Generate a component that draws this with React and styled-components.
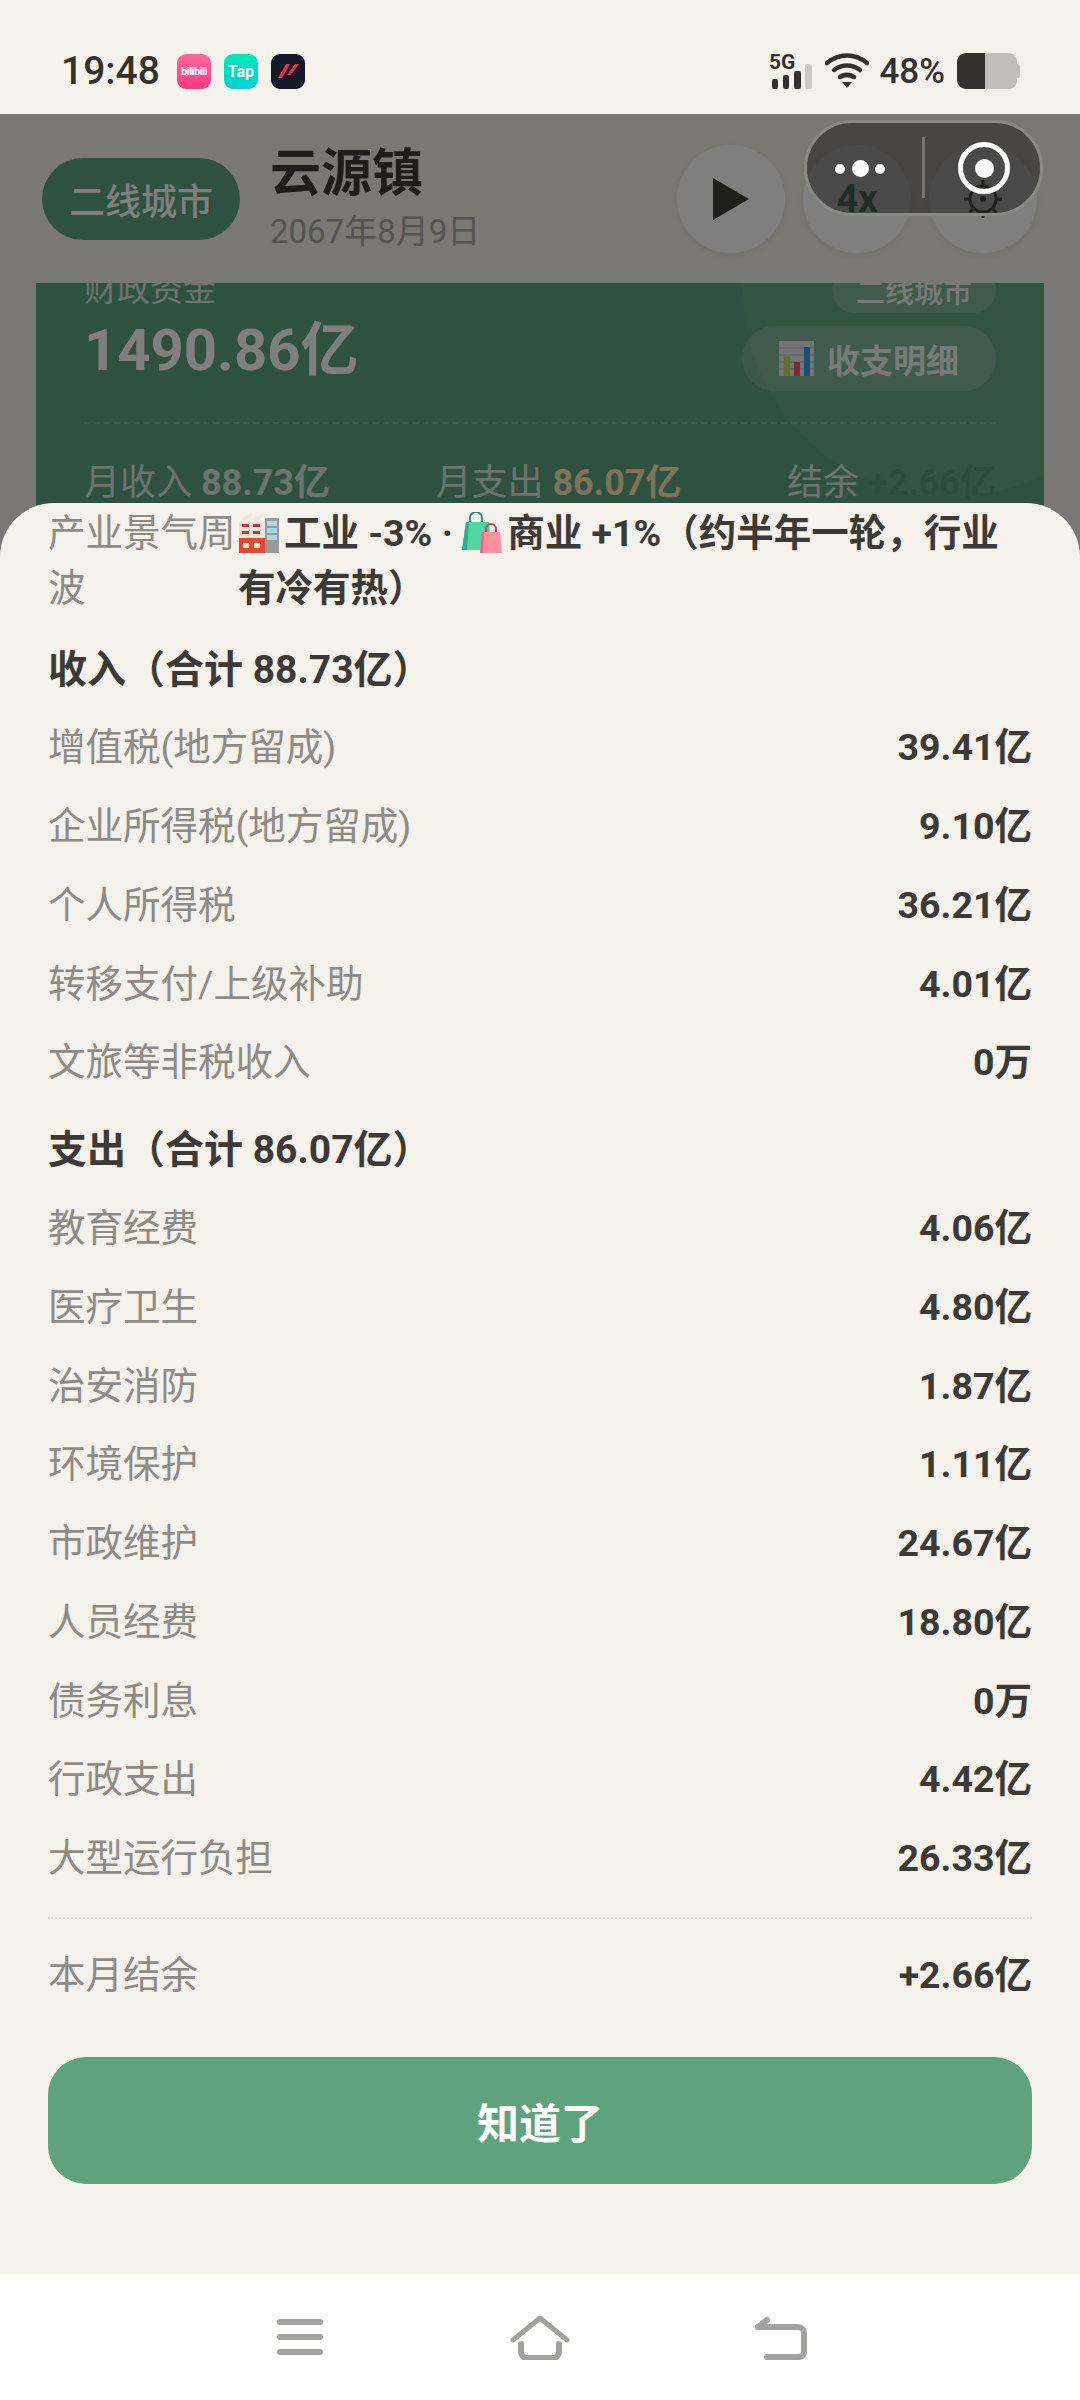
import React from 'react';
import styled, { createGlobalStyle } from 'styled-components';

const GlobalStyle = createGlobalStyle`
    html, body {
        margin: 0;
        padding: 0;
        background: #f5f1eb;
    }
    * {
        box-sizing: border-box;
    }
`;

const Screen = styled.div`
    width: 1080px;
    height: 2400px;
    display: flex;
    flex-direction: column;
    overflow: hidden;
    background: #f5f1eb;
    color: #3d3a36;
    font-family: Roboto, 'Noto Sans CJK SC', sans-serif;
`;

/* status bar */
const StatusBar = styled.div`
    height: 114px;
    flex: none;
    display: flex;
    align-items: center;
    padding: 28px 60px 0 61px;
    color: #33302d;
`;
const Time = styled.span`
    font-size: 39px;
    font-weight: 500;
    margin-right: 17px;
`;
const AppIcon = styled.div`
    width: 34px;
    height: 35px;
    border-radius: 9px;
    margin-right: 13px;
    display: flex;
    align-items: center;
    justify-content: center;
    overflow: hidden;
    color: #fff;
    font-weight: 700;
    font-size: ${(p) => p.$size || 16}px;
    letter-spacing: ${(p) => p.$spacing || 0}px;
    background: ${(p) => p.$bg};
`;
const StatusRight = styled.div`
    margin-left: auto;
    display: flex;
    align-items: center;
`;
const SignalIcon = styled.svg`
    overflow: visible;
`;
const WifiIcon = styled.svg`
    margin-left: 12px;
`;
const Percent = styled.span`
    font-size: 35px;
    font-weight: 500;
    margin: 0 12px 0 10px;
`;

/* page behind the sheet */
const Main = styled.div`
    flex: 1;
    position: relative;
    overflow: hidden;
    display: flex;
    flex-direction: column;
`;
const Header = styled.header`
    height: 169px;
    flex: none;
    display: flex;
    align-items: center;
    padding: 0 43px 0 42px;
`;
const LevelPill = styled.div`
    width: 198px;
    height: 82px;
    border-radius: 41px;
    background: #5fa37e;
    color: #fff;
    font-size: 36px;
    font-weight: 500;
    display: flex;
    align-items: center;
    justify-content: center;
`;
const TitleGroup = styled.div`
    margin-left: 30px;
    display: flex;
    flex-direction: column;
`;
const CityName = styled.div`
    font-size: 51px;
    font-weight: 700;
    line-height: 60px;
`;
const DateText = styled.div`
    font-size: 33px;
    line-height: 44px;
    margin-top: 6px;
    color: #a9a6a1;
`;
const HeaderActions = styled.div`
    margin-left: auto;
    display: flex;
    gap: 18px;
`;
const RoundButton = styled.div`
    width: 108px;
    height: 108px;
    border-radius: 50%;
    background: #fff;
    box-shadow: 0 2px 8px rgba(0, 0, 0, 0.06);
    display: flex;
    align-items: center;
    justify-content: center;
    font-size: 38px;
    font-weight: 700;
    color: #3a7458;
`;

const ScrollArea = styled.div`
    flex: 1;
    overflow: hidden;
    padding: 0 36px;
`;
const Card = styled.section`
    position: relative;
    overflow: hidden;
    margin-top: -53px;
    height: 600px;
    background: #5fa37e;
    padding: 36px 48px;
    color: #fff;
`;
const CardGlow = styled.div`
    position: absolute;
    left: 707px;
    top: -147px;
    width: 414px;
    height: 414px;
    border-radius: 50%;
    background: rgba(255, 255, 255, 0.06);
`;
const CardTop = styled.div`
    position: relative;
    display: flex;
    justify-content: space-between;
`;
const FundColumn = styled.div`
    display: flex;
    flex-direction: column;
`;
const FundLabel = styled.div`
    font-size: 33px;
    line-height: 48px;
    color: rgba(255, 255, 255, 0.75);
`;
const FundAmount = styled.div`
    font-size: 58px;
    line-height: 70px;
    font-weight: 700;
    margin-top: 1px;
`;
const CardActions = styled.div`
    display: flex;
    flex-direction: column;
    align-items: flex-end;
    padding-top: 1px;
    gap: 13px;
`;
const CardTag = styled.div`
    height: 46px;
    padding: 0 24px;
    border-radius: 23px;
    background: rgba(255, 255, 255, 0.16);
    font-size: 29px;
    font-weight: 500;
    display: flex;
    align-items: center;
    color: rgba(255, 255, 255, 0.9);
`;
const DetailButton = styled.div`
    width: 254px;
    height: 65px;
    border-radius: 33px;
    background: rgba(255, 255, 255, 0.16);
    font-size: 33px;
    font-weight: 700;
    display: flex;
    align-items: center;
    justify-content: center;
    gap: 13px;
    color: rgba(255, 255, 255, 0.9);
`;
const DashedLine = styled.div`
    position: relative;
    margin-top: 31px;
    border-top: 2px dashed rgba(255, 255, 255, 0.22);
`;
const Stats = styled.div`
    position: relative;
    margin-top: 35px;
    display: flex;
    justify-content: space-between;
    font-size: 36px;
    line-height: 48px;
    color: rgba(255, 255, 255, 0.75);
`;
const StatValue = styled.b`
    font-weight: 700;
    color: ${(p) => p.$color || 'rgba(255, 255, 255, 0.75)'};
`;

/* overlays */
const Dim = styled.div`
    position: absolute;
    inset: 0;
    background: rgba(0, 0, 0, 0.5);
`;
const Capsule = styled.div`
    position: absolute;
    top: 6px;
    right: 37px;
    width: 239px;
    height: 96px;
    border-radius: 48px;
    border: 3px solid #8a8a85;
    background: rgba(35, 35, 35, 0.58);
    display: flex;
    align-items: center;
`;
const CapsuleDivider = styled.div`
    position: absolute;
    left: 115px;
    top: 14px;
    width: 3px;
    height: 61px;
    background: rgba(255, 255, 255, 0.25);
`;
const CapsuleDots = styled.div`
    position: absolute;
    left: 28px;
    top: 37px;
    width: 50px;
    height: 17px;
    display: flex;
    align-items: center;
    justify-content: space-between;
`;
const Dot = styled.i`
    display: block;
    width: ${(p) => p.$size}px;
    height: ${(p) => p.$size}px;
    border-radius: 50%;
    background: #fff;
`;
const CapsuleTarget = styled.div`
    position: absolute;
    left: 151px;
    top: 19px;
    width: 52px;
    height: 52px;
    border-radius: 50%;
    border: 5px solid #fff;
    display: flex;
    align-items: center;
    justify-content: center;
`;

const Sheet = styled.div`
    position: absolute;
    left: 0;
    right: 0;
    bottom: 0;
    height: 1771px;
    background: #f5f1eb;
    border-radius: 54px 54px 0 0;
    padding: 3px 48px 0 48px;
    display: flex;
    flex-direction: column;
    font-size: 37.5px;
`;
const NoteRow = styled.div`
    display: flex;
    line-height: 55px;
    padding-bottom: 8px;
`;
const NoteLabel = styled.div`
    flex: 0 0 190px;
    color: #8e8a84;
`;
const NoteValue = styled.div`
    flex: 1;
    font-weight: 700;
    svg {
        vertical-align: -7px;
        margin-right: 5px;
    }
`;
const SectionTitle = styled.div`
    font-size: 39px;
    font-weight: 700;
    line-height: 56px;
    padding: ${(p) => p.$top}px 0 ${(p) => p.$bottom}px;
`;
const Row = styled.div`
    display: flex;
    justify-content: space-between;
    line-height: 56.25px;
    padding: 11.25px 0;
`;
const RowLabel = styled.span`
    color: #8e8a84;
`;
const RowValue = styled.span`
    font-weight: 700;
`;
const DottedLine = styled.div`
    margin: 19px 0 17px;
    border-top: 2px dotted #dedad3;
`;
const ConfirmButton = styled.button`
    margin: 43px 0 0;
    height: 127px;
    flex: none;
    border: 0;
    border-radius: 38px;
    background: #5fa37e;
    color: #fff;
    font-family: inherit;
    font-size: 42px;
    font-weight: 700;
`;

const NavBar = styled.nav`
    height: 126px;
    flex: none;
    background: #fff;
    display: flex;
    justify-content: center;
    align-items: center;
    gap: 180px;
    padding-top: 2px;
`;

function BarEmoji() {
    return (
        <svg width="35" height="35" viewBox="0 0 35 35">
            <rect width="35" height="35" fill="#e9e7ee" />
            <path d="M0 7h35M0 14h35M0 21h35M0 28h35" stroke="#bdbac6" strokeWidth="1" />
            <rect x="5" y="15" width="6" height="20" fill="#b9e060" />
            <rect x="15" y="21" width="6" height="14" fill="#ff5a48" />
            <rect x="25" y="6" width="6" height="29" fill="#2a9cf5" />
        </svg>
    );
}

function FactoryEmoji() {
    return (
        <svg width="41" height="41" viewBox="0 0 41 41">
            <path d="M3 8c2-4 7-5 11-7-1 3-4 6-6 8zM15 8c2-4 7-5 11-7-1 3-4 6-6 8z" fill="#e8e6e2" />
            <rect x="27" y="6" width="14" height="35" fill="#9a9a98" />
            <rect x="29" y="9" width="10" height="5" fill="#a9d5e8" />
            <rect x="29" y="16" width="10" height="5" fill="#a9d5e8" />
            <rect x="29" y="23" width="10" height="5" fill="#a9d5e8" />
            <rect x="1" y="10" width="26" height="31" fill="#e8e4de" />
            <rect x="4" y="12" width="7" height="3" fill="#cf2f3e" />
            <rect x="15" y="12" width="7" height="3" fill="#cf2f3e" />
            <rect x="4" y="19" width="7" height="3" fill="#cf2f3e" />
            <rect x="15" y="19" width="7" height="3" fill="#cf2f3e" />
            <rect x="1" y="26" width="26" height="15" fill="#e5482e" />
            <rect x="5" y="31" width="6" height="5" fill="#f5e6c8" />
            <rect x="16" y="31" width="6" height="5" fill="#f5e6c8" />
        </svg>
    );
}

function BagsEmoji() {
    return (
        <svg width="40" height="41" viewBox="0 0 40 41">
            <path d="M8 10V6a6 6 0 0 1 12 0v6" fill="none" stroke="#2c8f82" strokeWidth="2" />
            <path d="M4 10h23l3 28H0z" fill="#4fd6a2" />
            <path d="M0 38l4-28h3l-2 28z" fill="#2fae8e" />
            <path d="M24 20v-3a5 5 0 0 1 10 0v4" fill="none" stroke="#c93a5c" strokeWidth="2" />
            <path d="M20 20h18l2 21H18z" fill="#ff8f9e" />
            <path d="M18 41l2-21h2l-1 21z" fill="#f0607f" />
        </svg>
    );
}

function Gear() {
    return (
        <svg width="40" height="40" viewBox="0 0 40 40" fill="none" stroke="#3c3c38" strokeWidth="3">
            <circle cx="20" cy="20" r="13" />
            <circle cx="20" cy="20" r="3" fill="#3c3c38" stroke="none" />
            <path d="M20 1v5M20 34v5M1 20h5M34 20h5M6.5 6.5l3.5 3.5M30 30l3.5 3.5M33.5 6.5L30 10M10 30l-3.5 3.5" />
        </svg>
    );
}

const income = [
    ['增值税(地方留成)', '39.41亿'],
    ['企业所得税(地方留成)', '9.10亿'],
    ['个人所得税', '36.21亿'],
    ['转移支付/上级补助', '4.01亿'],
    ['文旅等非税收入', '0万'],
];

const expense = [
    ['教育经费', '4.06亿'],
    ['医疗卫生', '4.80亿'],
    ['治安消防', '1.87亿'],
    ['环境保护', '1.11亿'],
    ['市政维护', '24.67亿'],
    ['人员经费', '18.80亿'],
    ['债务利息', '0万'],
    ['行政支出', '4.42亿'],
    ['大型运行负担', '26.33亿'],
];

function Rows({ items }) {
    return items.map(([label, value]) => (
        <Row key={label}>
            <RowLabel>{label}</RowLabel>
            <RowValue>{value}</RowValue>
        </Row>
    ));
}

export default function App() {
    return (
        <Screen>
            <GlobalStyle />
            <StatusBar>
                <Time>19:48</Time>
                <AppIcon $bg="linear-gradient(#fb6a9c, #ff3a80)" $size={11} $spacing={-0.5}>
                    bilibili
                </AppIcon>
                <AppIcon $bg="linear-gradient(#00e8b4, #00d0d8)" $size={16}>
                    Tap
                </AppIcon>
                <AppIcon $bg="#141829">
                    <svg width="34" height="35" viewBox="0 0 34 35">
                        <path d="M15 10h4l-8 14H7zM24 10h4l-8 11h-4z" fill="#e8304a" />
                    </svg>
                </AppIcon>
                <StatusRight>
                    <SignalIcon width="44" height="36" viewBox="0 0 44 36">
                        <text x="0" y="16" fontSize="21" fontWeight="700" fontFamily="Roboto" fill="#33302d">
                            5G
                        </text>
                        <rect x="3" y="26" width="6" height="10" rx="2" fill="#33302d" />
                        <rect x="14" y="22" width="6" height="14" rx="2" fill="#33302d" />
                        <rect x="25" y="18" width="7" height="18" rx="2" fill="#33302d" />
                        <rect x="36" y="11" width="7" height="25" rx="2" fill="#ccc9c3" />
                    </SignalIcon>
                    <WifiIcon width="44" height="36" viewBox="0 0 44 36" fill="none" stroke="#33302d" strokeLinecap="round">
                        <path d="M2 10C14 0 30 0 42 10" strokeWidth="4.5" />
                        <path d="M9 17c8-6 18-6 26 0" strokeWidth="4.5" />
                        <path d="M15 24c5-3 9-3 14 0" strokeWidth="4.5" />
                        <path d="M17 29h10l-5 6z" fill="#33302d" stroke="none" />
                    </WifiIcon>
                    <Percent>48%</Percent>
                    <svg width="63" height="36" viewBox="0 0 63 36">
                        <path d="M9 0h19v36H9a9 9 0 0 1-9-9V9a9 9 0 0 1 9-9z" fill="#33302d" />
                        <path d="M28 0h24a8 8 0 0 1 8 8v20a8 8 0 0 1-8 8H28z" fill="#c2bfb9" />
                        <path d="M60 11h1a2 2 0 0 1 2 2v10a2 2 0 0 1-2 2h-1z" fill="#c2bfb9" />
                    </svg>
                </StatusRight>
            </StatusBar>

            <Main>
                <Header>
                    <LevelPill>二线城市</LevelPill>
                    <TitleGroup>
                        <CityName>云源镇</CityName>
                        <DateText>2067年8月9日</DateText>
                    </TitleGroup>
                    <HeaderActions>
                        <RoundButton>
                            <svg width="36" height="42" viewBox="0 0 36 42">
                                <path d="M0 0l36 21L0 42z" fill="#3d3d35" />
                            </svg>
                        </RoundButton>
                        <RoundButton>4x</RoundButton>
                        <RoundButton>
                            <Gear />
                        </RoundButton>
                    </HeaderActions>
                </Header>

                <ScrollArea>
                    <Card>
                        <CardGlow />
                        <CardTop>
                            <FundColumn>
                                <FundLabel>财政资金</FundLabel>
                                <FundAmount>1490.86亿</FundAmount>
                            </FundColumn>
                            <CardActions>
                                <CardTag>二线城市</CardTag>
                                <DetailButton>
                                    <BarEmoji />
                                    收支明细
                                </DetailButton>
                            </CardActions>
                        </CardTop>
                        <DashedLine />
                        <Stats>
                            <span>
                                月收入 <StatValue>88.73亿</StatValue>
                            </span>
                            <span>
                                月支出 <StatValue $color="#ffe6b4">86.07亿</StatValue>
                            </span>
                            <span>
                                结余 <StatValue $color="#5a9a78">+2.66亿</StatValue>
                            </span>
                        </Stats>
                    </Card>
                </ScrollArea>

                <Dim />

                <Capsule>
                    <CapsuleDots>
                        <Dot $size={10} />
                        <Dot $size={17} />
                        <Dot $size={10} />
                    </CapsuleDots>
                    <CapsuleDivider />
                    <CapsuleTarget>
                        <Dot $size={19} />
                    </CapsuleTarget>
                </Capsule>

                <Sheet>
                    <NoteRow>
                        <NoteLabel>产业景气周波</NoteLabel>
                        <NoteValue>
                            <FactoryEmoji />
                            工业 -3% · <BagsEmoji />
                            商业 +1%（约半年一轮，行业有冷有热）
                        </NoteValue>
                    </NoteRow>
                    <SectionTitle $top={18} $bottom={10}>
                        收入（合计 88.73亿）
                    </SectionTitle>
                    <Rows items={income} />
                    <SectionTitle $top={20} $bottom={11}>
                        支出（合计 86.07亿）
                    </SectionTitle>
                    <Rows items={expense} />
                    <DottedLine />
                    <Row>
                        <RowLabel>本月结余</RowLabel>
                        <RowValue>+2.66亿</RowValue>
                    </Row>
                    <ConfirmButton>知道了</ConfirmButton>
                </Sheet>
            </Main>

            <NavBar>
                <svg width="60" height="44" viewBox="0 0 60 44" fill="none" stroke="#a2a2a0" strokeWidth="6" strokeLinecap="round">
                    <path d="M10 6h40M10 21h40M10 36h40" />
                </svg>
                <svg width="60" height="44" viewBox="0 0 60 44" fill="none" stroke="#a2a2a0" strokeWidth="5" strokeLinecap="round" strokeLinejoin="round">
                    <path d="M3 24L30 2l27 22" />
                    <path d="M11 28v8a6 6 0 0 0 6 6h26a6 6 0 0 0 6-6v-8" strokeWidth="6" />
                </svg>
                <svg width="60" height="44" viewBox="0 0 60 44" fill="none" stroke="#a2a2a0" strokeWidth="6" strokeLinecap="round" strokeLinejoin="round">
                    <path d="M8 11h40a6 6 0 0 1 6 6v19a5 5 0 0 1-5 5H17" />
                    <path d="M8 11l9-7" />
                </svg>
            </NavBar>
        </Screen>
    );
}
